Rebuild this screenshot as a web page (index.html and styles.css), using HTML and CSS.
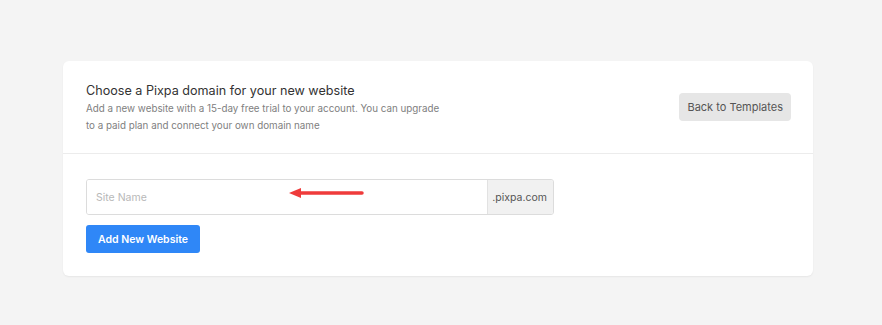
FILE: index.html
```html
<!DOCTYPE html>
<html lang="en">
<head>
    <meta charset="UTF-8">
    <meta name="viewport" content="width=device-width, initial-scale=1.0">
    <title>Add New Website</title>
    <link rel="stylesheet" href="styles.css">
</head>
<body>
    <div class="card">
        <div class="card-header">
            <div class="intro">
                <h2>Choose a Pixpa domain for your new website</h2>
                <p>Add a new website with a 15-day free trial to your account. You can upgrade to a paid plan and connect your own domain name</p>
            </div>
            <button class="back-btn">Back to Templates</button>
        </div>

        <div class="card-body">
            <div class="domain-group">
                <input type="text" placeholder="Site Name">
                <span class="suffix">.pixpa.com</span>
                <svg class="hint-arrow" width="80" height="12" viewBox="0 0 80 12">
                    <path d="M12 6 H74" stroke="#ef3b3b" stroke-width="3.5" stroke-linecap="round"/>
                    <path d="M1 6 L13 1 L13 11 Z" fill="#ef3b3b"/>
                </svg>
            </div>
            <button class="add-btn">Add New Website</button>
        </div>
    </div>
</body>
</html>
```

FILE: styles.css
```css
* {
    margin: 0;
    padding: 0;
    box-sizing: border-box;
}

body {
    font-family: 'Inter', 'Liberation Sans', sans-serif;
    background: #f4f4f4;
    padding: 61px 69px 0 63px;
    min-height: 100vh;
}

.card {
    width: 750px;
    background: #ffffff;
    border-radius: 6px;
    box-shadow: 0 1px 2px rgba(0, 0, 0, 0.06);
}

.card-header {
    display: flex;
    justify-content: space-between;
    align-items: flex-start;
    height: 93px;
    padding: 22px 22px 0 23px;
    border-bottom: 1px solid #ececec;
}

.intro h2 {
    font-size: 12.6px;
    font-weight: 400;
    line-height: 15px;
    color: #333333;
    margin-bottom: 3px;
}

.intro p {
    max-width: 360px;
    font-size: 9.8px;
    line-height: 16.5px;
    color: #808080;
}

.back-btn {
    margin-top: 10px;
    background: #e6e6e6;
    border: none;
    border-radius: 4px;
    padding: 0 8px;
    height: 28px;
    font-family: inherit;
    font-size: 11px;
    color: #555555;
    cursor: pointer;
}

.card-body {
    padding: 25px 23px 23px;
}

.domain-group {
    position: relative;
    display: flex;
    width: 468px;
    height: 36px;
    border: 1px solid #dcdcdc;
    border-radius: 3px;
    overflow: hidden;
}

.domain-group input {
    flex: 1;
    border: none;
    outline: none;
    padding: 0 9px;
    font-family: inherit;
    font-size: 10.5px;
    color: #333333;
}

.domain-group input::placeholder {
    color: #b8b8b8;
}

.suffix {
    display: flex;
    align-items: center;
    padding: 0 6px 0 4px;
    background: #f1f1f1;
    border-left: 1px solid #e2e2e2;
    font-size: 10.5px;
    color: #555555;
}

.hint-arrow {
    position: absolute;
    left: 201px;
    top: 7px;
}

.add-btn {
    margin-top: 10px;
    background: #2f87f7;
    color: #ffffff;
    border: none;
    border-radius: 3px;
    height: 28px;
    padding: 0 12px;
    font-family: inherit;
    font-size: 10.5px;
    font-weight: 600;
    cursor: pointer;
}
```
